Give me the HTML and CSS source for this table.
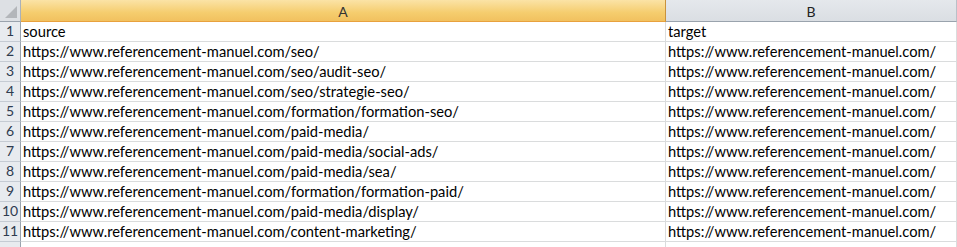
FILE: index.html
```html
<!DOCTYPE html>
<html>
<head>
<meta charset="utf-8">
<link rel="stylesheet" href="styles.css">
</head>
<body>
<div class="sheet">
  <div class="hdr corner"><span class="tri"></span></div>
  <div class="hdr col sel">A</div>
  <div class="hdr col">B</div>

  <div class="rh">1</div><div class="c">source</div><div class="c">target</div>
  <div class="rh">2</div><div class="c">https://www.referencement-manuel.com/seo/</div><div class="c">https://www.referencement-manuel.com/</div>
  <div class="rh">3</div><div class="c">https://www.referencement-manuel.com/seo/audit-seo/</div><div class="c">https://www.referencement-manuel.com/</div>
  <div class="rh">4</div><div class="c">https://www.referencement-manuel.com/seo/strategie-seo/</div><div class="c">https://www.referencement-manuel.com/</div>
  <div class="rh">5</div><div class="c">https://www.referencement-manuel.com/formation/formation-seo/</div><div class="c">https://www.referencement-manuel.com/</div>
  <div class="rh">6</div><div class="c">https://www.referencement-manuel.com/paid-media/</div><div class="c">https://www.referencement-manuel.com/</div>
  <div class="rh">7</div><div class="c">https://www.referencement-manuel.com/paid-media/social-ads/</div><div class="c">https://www.referencement-manuel.com/</div>
  <div class="rh">8</div><div class="c">https://www.referencement-manuel.com/paid-media/sea/</div><div class="c">https://www.referencement-manuel.com/</div>
  <div class="rh">9</div><div class="c">https://www.referencement-manuel.com/formation/formation-paid/</div><div class="c">https://www.referencement-manuel.com/</div>
  <div class="rh">10</div><div class="c">https://www.referencement-manuel.com/paid-media/display/</div><div class="c">https://www.referencement-manuel.com/</div>
  <div class="rh">11</div><div class="c">https://www.referencement-manuel.com/content-marketing/</div><div class="c">https://www.referencement-manuel.com/</div>
  <div class="rh"></div><div class="c"></div><div class="c"></div>
</div>
</body>
</html>
```

FILE: styles.css
```css
html, body {
  margin: 0;
  padding: 0;
  background: #ffffff;
  overflow: hidden;
}
.sheet {
  width: 957px;
  height: 247px;
  overflow: hidden;
  display: grid;
  grid-template-columns: 21px 645px 291px;
  grid-auto-rows: 20px;
  grid-template-rows: 22px;
  font-family: "Lato", "Liberation Sans", sans-serif;
  font-size: 14.7px;
  color: #000;
}
.sheet > div {
  box-sizing: border-box;
  white-space: nowrap;
  overflow: hidden;
}
.hdr {
  border-bottom: 1px solid #9aa3ad;
  border-right: 1px solid #b9c0c8;
  background: linear-gradient(#e5e8ec, #dadee3);
  color: #222;
  display: flex;
  align-items: center;
  justify-content: center;
  font-size: 14px;
  padding-top: 1px;
}
.corner {
  background: #dde0e4;
  position: relative;
  border-right: 1px solid #aab1ba;
}
.tri {
  position: absolute;
  right: 3px;
  bottom: 3px;
  width: 0;
  height: 0;
  border-left: 12px solid transparent;
  border-bottom: 12px solid #b3b6ba;
}
.sel {
  background: linear-gradient(#fbe3a6, #f5cd6e 60%, #f1c15f);
  border-bottom: 1px solid #e8a13e;
  border-right: 1px solid #c9923c;
  color: #333;
}
.rh {
  background: #e8ebef;
  border-right: 1px solid #9aa3ad;
  border-bottom: 1px solid #c5cbd3;
  color: #2f3c4f;
  display: flex;
  align-items: flex-end;
  justify-content: center;
  padding-bottom: 2px;
  font-size: 14px;
}
.c {
  border-right: 1px solid #dadcdd;
  border-bottom: 1px solid #dadcdd;
  display: flex;
  align-items: flex-end;
  padding-left: 2px;
  padding-bottom: 1px;
}
```
